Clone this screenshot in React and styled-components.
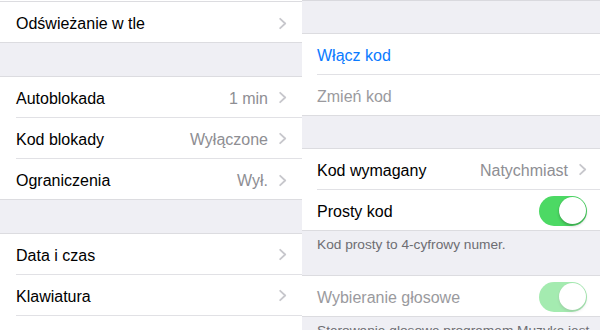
import React from 'react';
import styled, { createGlobalStyle } from 'styled-components';

const Global = createGlobalStyle`
  html, body {
    margin: 0;
    padding: 0;
    background: #fff;
  }
  body {
    font-family: "Liberation Sans", Arial, sans-serif;
    -webkit-font-smoothing: antialiased;
  }
`;

const Screen = styled.div`
  display: flex;
  width: 600px;
  height: 330px;
  overflow: hidden;
`;

const Panel = styled.div`
  display: flex;
  flex-direction: column;
  flex: ${(p) => (p.$width ? `0 0 ${p.$width}px` : '1 1 auto')};
  min-width: 0;
  padding-top: ${(p) => p.$top || 0}px;
  background: ${(p) => p.$bg || '#fff'};
  --inset: ${(p) => p.$inset}px;
  --edge: ${(p) => p.$edge}px;
`;

const Spacer = styled.div`
  flex: 0 0 auto;
  height: ${(p) => p.$h}px;
  background: #efeff4;
  border-top: ${(p) => (p.$line ? '1px solid #d9d9de' : 'none')};
`;

const Group = styled.div`
  flex: 0 0 auto;
  background: #fff;
  border-top: 1px solid #dcdce0;
  border-bottom: ${(p) => (p.$open ? 'none' : '1px solid #dcdce0')};
`;

const Row = styled.div`
  padding-left: var(--inset);
`;

const RowInner = styled.div`
  display: flex;
  align-items: center;
  height: 41px;
  box-sizing: border-box;
  padding: 3px var(--edge) 0 0;
  border-bottom: ${(p) => (p.$last ? 'none' : '1px solid #e1e1e5')};
  margin-bottom: ${(p) => (p.$last ? '-1px' : '0')};
`;

const toneColor = {
  normal: '#000',
  link: '#0a7aff',
  disabled: '#9a9a9e',
};

const Label = styled.span`
  flex: 1 1 auto;
  font-size: 16px;
  color: ${(p) => toneColor[p.$tone || 'normal']};
  white-space: nowrap;
`;

const Value = styled.span`
  font-size: 16px;
  color: #8e8e93;
  margin-right: 11px;
  white-space: nowrap;
`;

const Footer = styled.div`
  flex: 0 0 auto;
  box-sizing: border-box;
  height: ${(p) => (p.$h ? `${p.$h}px` : 'auto')};
  padding: 5px 8px 0 15px;
  font-size: 13.7px;
  line-height: 17px;
  color: #6d6d72;
`;

const Switch = styled.div`
  flex: 0 0 auto;
  position: relative;
  width: 48px;
  height: 30px;
  box-sizing: border-box;
  border-radius: 15px;
  background: #4cd964;
  opacity: ${(p) => (p.$disabled ? 0.5 : 1)};
  margin-top: -3px;
`;

const Knob = styled.div`
  position: absolute;
  top: 1.5px;
  right: 1.5px;
  width: 27px;
  height: 27px;
  border-radius: 50%;
  background: #fff;
  box-shadow: 0 2px 3px rgba(0, 0, 0, 0.22), 0 0 0 0.5px rgba(0, 0, 0, 0.06);
`;

const Chevron = () => (
  <svg width="8" height="13" viewBox="0 0 8 13" style={{ flex: '0 0 auto', marginTop: -2 }}>
    <polyline
      points="1.2,1.8 6.2,6.5 1.2,11.2"
      fill="none"
      stroke="#c7c7cc"
      strokeWidth="1.8"
      strokeLinecap="round"
      strokeLinejoin="round"
    />
  </svg>
);

function Item({ label, value, tone, chevron, toggle, disabled, last }) {
  return (
    <Row>
      <RowInner $last={last}>
        <Label $tone={tone}>{label}</Label>
        {value && <Value>{value}</Value>}
        {chevron && <Chevron />}
        {toggle && (
          <Switch $disabled={disabled}>
            <Knob />
          </Switch>
        )}
      </RowInner>
    </Row>
  );
}

export default function App() {
  return (
    <>
      <Global />
      <Screen>
        <Panel $width={302} $top={1} $inset={16} $edge={15}>
          <Group>
            <Item label="Odświeżanie w tle" chevron last />
          </Group>
          <Spacer $h={33} />
          <Group>
            <Item label="Autoblokada" value="1 min" chevron />
            <Item label="Kod blokady" value="Wyłączone" chevron />
            <Item label="Ograniczenia" value="Wył." chevron last />
          </Group>
          <Spacer $h={33} />
          <Group $open>
            <Item label="Data i czas" chevron />
            <Item label="Klawiatura" chevron />
            <Item label="" />
          </Group>
        </Panel>

        <Panel $bg="#efeff4" $inset={15} $edge={13}>
          <Spacer $h={32} $line />
          <Group>
            <Item label="Włącz kod" tone="link" />
            <Item label="Zmień kod" tone="disabled" last />
          </Group>
          <Spacer $h={32} />
          <Group>
            <Item label="Kod wymagany" value="Natychmiast" chevron />
            <Item label="Prosty kod" toggle last />
          </Group>
          <Footer $h={44}>Kod prosty to 4-cyfrowy numer.</Footer>
          <Group>
            <Item label="Wybieranie głosowe" tone="disabled" toggle disabled last />
          </Group>
          <Footer>Sterowanie głosowe programem Muzyka jest zawsze włączone.</Footer>
        </Panel>
      </Screen>
    </>
  );
}
